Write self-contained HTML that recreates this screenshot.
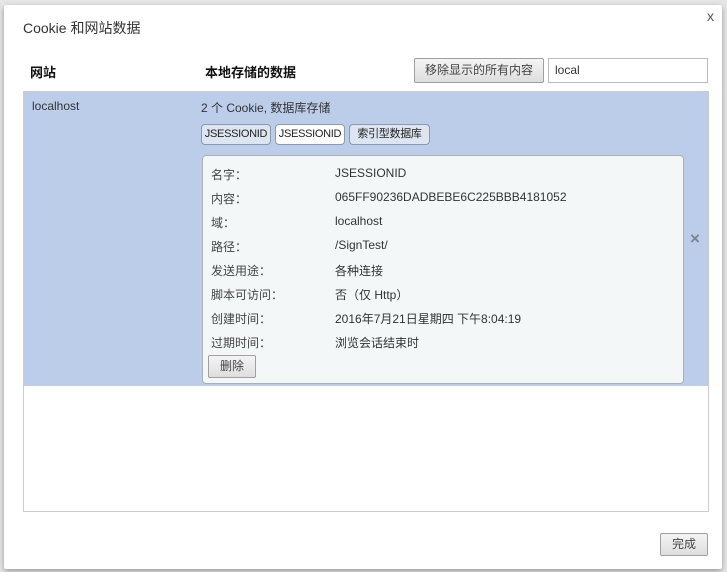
<!DOCTYPE html><html><head><meta charset="utf-8"><style>
body{margin:0;width:727px;height:572px;background:#e6e6e6;font-family:"Liberation Sans","Noto Sans CJK SC",sans-serif;font-size:12px;color:#333;position:relative;overflow:hidden}
.a{position:absolute}
.dlg{left:4px;top:5px;width:718px;height:564px;background:#fff;box-shadow:0 2px 6px rgba(0,0,0,.35);border-radius:2px}
.btn{background:linear-gradient(#f4f4f4,#dedede);border:1px solid #a0a0a0;border-radius:2px;text-align:center;box-sizing:border-box;color:#444}
.chip{top:124px;height:21px;line-height:19px;box-sizing:border-box;border:1px solid #8a9ab0;border-radius:4px;background:#dde5f1;text-align:center;color:#222;font-size:11px;letter-spacing:-0.3px}
.l{left:211px;color:#444}.v{left:335px;color:#333}
</style></head><body>
<div class="a dlg"></div>
<div class="a" style="left:23px;top:18px;font-size:14px;color:#333">Cookie 和网站数据</div>
<div class="a" style="left:707px;top:8px;font-size:14px;color:#555">x</div>
<div class="a" style="left:30px;top:62px;font-size:13px;font-weight:bold;color:#111">网站</div>
<div class="a" style="left:205px;top:62px;font-size:13px;font-weight:bold;color:#111">本地存储的数据</div>
<div class="a btn" style="left:414px;top:58px;width:130px;height:25px;line-height:23px">移除显示的所有内容</div>
<div class="a" style="left:548px;top:58px;width:160px;height:25px;box-sizing:border-box;border:1px solid #bbb;line-height:23px;padding-left:6px">local</div>
<div class="a" style="left:23px;top:91px;width:686px;height:421px;box-sizing:border-box;border:1px solid #ccc"></div>
<div class="a" style="left:24px;top:92px;width:684px;height:294px;background:#bbcde9"></div>
<div class="a" style="left:32px;top:99px">localhost</div>
<div class="a" style="left:201px;top:99px">2 个 Cookie, 数据库存储</div>
<div class="a chip" style="left:201px;width:70px">JSESSIONID</div>
<div class="a chip" style="left:275px;width:70px;background:#fff">JSESSIONID</div>
<div class="a chip" style="left:349px;width:81px">索引型数据库</div>
<div class="a" style="left:202px;top:155px;width:482px;height:229px;box-sizing:border-box;border:1px solid #a8b0b8;border-radius:4px;background:#f4f7f8"></div>
<div class="a l" style="top:166px">名字：</div><div class="a v" style="top:166px">JSESSIONID</div>
<div class="a l" style="top:190px">内容：</div><div class="a v" style="top:190px">065FF90236DADBEBE6C225BBB4181052</div>
<div class="a l" style="top:214px">域：</div><div class="a v" style="top:214px">localhost</div>
<div class="a l" style="top:238px">路径：</div><div class="a v" style="top:238px">/SignTest/</div>
<div class="a l" style="top:262px">发送用途：</div><div class="a v" style="top:262px">各种连接</div>
<div class="a l" style="top:286px">脚本可访问：</div><div class="a v" style="top:286px">否（仅 Http）</div>
<div class="a l" style="top:310px">创建时间：</div><div class="a v" style="top:310px">2016年7月21日星期四 下午8:04:19</div>
<div class="a l" style="top:334px">过期时间：</div><div class="a v" style="top:334px">浏览会话结束时</div>
<div class="a btn" style="left:208px;top:355px;width:48px;height:23px;line-height:21px">删除</div>
<div class="a" style="left:690px;top:229px;font-size:17px;color:#7a8694;font-weight:bold">×</div>
<div class="a btn" style="left:660px;top:533px;width:48px;height:23px;line-height:21px">完成</div>
</body></html>
